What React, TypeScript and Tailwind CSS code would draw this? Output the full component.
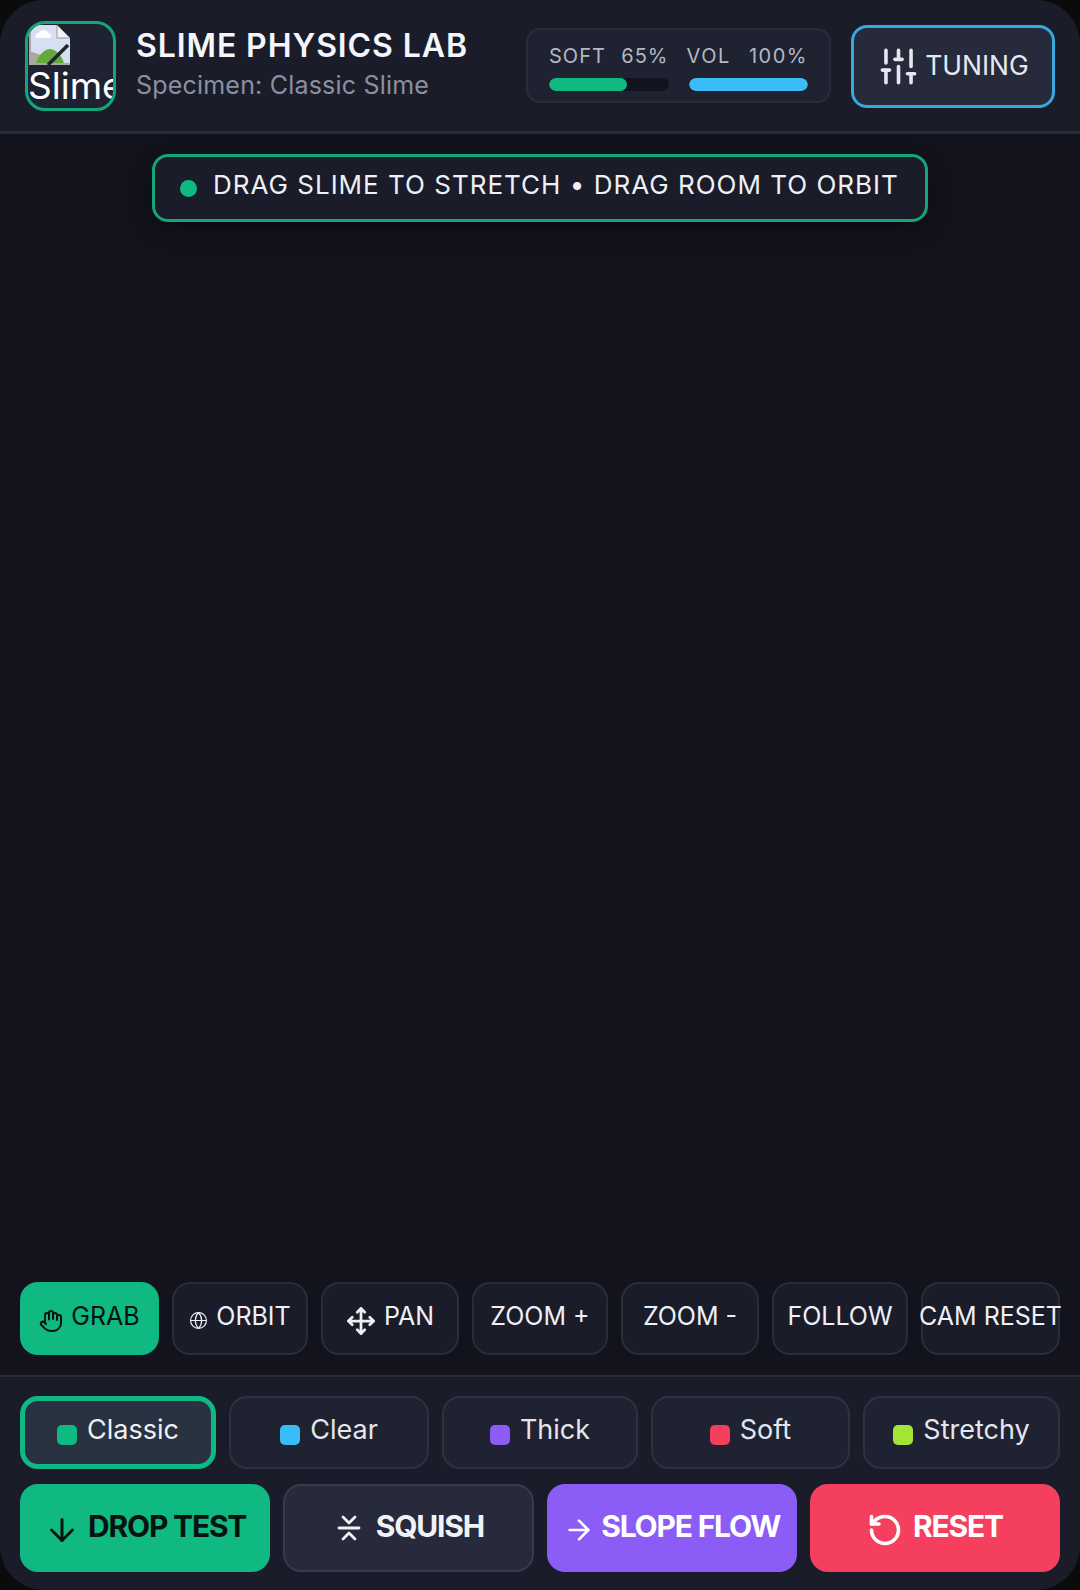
import React from 'react';
import { ArrowDown, ArrowRight, Globe, Hand, Move, RotateCcw, SlidersVertical } from 'lucide-react';

const tools = [
  { label: 'GRAB', icon: <Hand size={24} strokeWidth={2} className="mt-1" />, active: true },
  { label: 'ORBIT', icon: <Globe size={19} strokeWidth={1.5} className="mt-1" /> },
  { label: 'PAN', icon: <Move size={30} strokeWidth={2.2} className="mt-1" /> },
  { label: 'ZOOM +' },
  { label: 'ZOOM -' },
  { label: 'FOLLOW' },
  { label: 'CAM RESET' },
];

const presets = [
  { label: 'Classic', color: 'bg-[#10b981]', active: true },
  { label: 'Clear', color: 'bg-[#38bdf8]' },
  { label: 'Thick', color: 'bg-[#8b5cf6]' },
  { label: 'Soft', color: 'bg-[#f43f5e]' },
  { label: 'Stretchy', color: 'bg-[#a3e635]' },
];

function SquishIcon() {
  return (
    <svg width="24" height="28" viewBox="0 0 24 28" fill="none" stroke="currentColor" strokeWidth="2.8" strokeLinecap="round" strokeLinejoin="round">
      <path d="M2 14h20" />
      <path d="M6 3l6 6 6-6" />
      <path d="M6 25l6-6 6 6" />
    </svg>
  );
}

function BrokenImage() {
  return (
    <svg width="41" height="40" viewBox="0 0 41 40" className="block">
      <path d="M0 0h28l13 13v27H0z" fill="#d5e0f2" />
      <path d="M0 26l12 4-4 10H0z" fill="#a9a9a0" />
      <path d="M0 0h2v40H0zM0 38h41v2H0z" fill="#a8a8a8" />
      <path d="M28 0l13 13H28z" fill="#f2f2f2" stroke="#9a9a9a" strokeWidth="1" />
      <path d="M6 12c0-3 2-4 4-4 1-4 8-4 9 0 3 0 4 3 2 5H7c-1 0-1-1-1-1z" fill="#ffffff" />
      <path d="M7 38c3-9 9-14 14-14s11 5 14 14z" fill="#62ab3a" />
      <path d="M19 40L39 20" stroke="#20242f" strokeWidth="3.5" />
    </svg>
  );
}

export default function App() {
  return (
    <div className="h-[1590px] w-[1080px] overflow-hidden bg-[#0b0b0b] font-['Inter',sans-serif]">
      <div className="flex h-full flex-col overflow-hidden rounded-[44px] bg-[#12131d] text-[#eef0f6]">
        {/* Header */}
        <header className="flex h-[134px] shrink-0 items-center border-b-[3px] border-[#2a2d39] bg-[#1a1d29] px-[25px]">
          <div className="h-[90px] w-[91px] shrink-0 overflow-hidden rounded-[20px] border-[3px] border-[#14a57a] bg-[#1f2331] text-[37px] leading-[42px] text-white">
            <div className="pl-[1px] pt-[1px]">
              <BrokenImage />
            </div>
            <div className="whitespace-nowrap">Slime</div>
          </div>
          <div className="ml-[20px] flex w-[390px] shrink-0 flex-col pb-[5px]">
            <h1 className="text-[32px] font-semibold leading-[40px] tracking-[0.9px] text-[#f4f6fb]">SLIME PHYSICS LAB</h1>
            <p className="mt-[3px] text-[25px] leading-[32px] tracking-[0.2px] text-[#8b90a0]">Specimen: Classic Slime</p>
          </div>
          <div className="flex h-[75px] w-[305px] shrink-0 gap-[20px] rounded-[14px] border-2 border-[#2a2d39] bg-[#1f2230] px-[21px] pt-[13px]">
            <div className="flex-1">
              <div className="flex justify-between text-[20px] leading-[26px] tracking-[1px] text-[#b4b8c4]">
                <span>SOFT</span>
                <span>65%</span>
              </div>
              <div className="mt-[9px] h-[13px] overflow-hidden rounded-full bg-[#12131d]">
                <div className="h-full rounded-full bg-[#10b981]" style={{ width: '65%' }} />
              </div>
            </div>
            <div className="flex-1">
              <div className="-ml-[2px] flex justify-between text-[20px] leading-[26px] tracking-[1.5px] text-[#b4b8c4]">
                <span>VOL</span>
                <span>100%</span>
              </div>
              <div className="mt-[9px] h-[13px] overflow-hidden rounded-full bg-[#12131d]">
                <div className="h-full rounded-full bg-[#38bdf8]" style={{ width: '100%' }} />
              </div>
            </div>
          </div>
          <button className="ml-auto mt-[1px] flex h-[83px] w-[204px] shrink-0 items-center justify-center gap-[5px] rounded-[16px] border-[3px] border-[#38a9de] bg-[#262a3b] text-[26.5px] text-[#e6e8f0]">
            <SlidersVertical size={43} strokeWidth={2} />
            TUNING
          </button>
        </header>

        {/* Stage */}
        <main className="flex flex-1 flex-col items-center pt-[20px]">
          <div className="flex h-[68px] w-[776px] items-center whitespace-nowrap rounded-[16px] border-[3px] border-[#14a57a] bg-[#1a1d29] pl-[25px] text-[26px] tracking-[1px] text-[#eef0f6] shadow-[0_8px_24px_rgba(0,0,0,0.4)]">
            <span className="mr-[16px] h-[17px] w-[17px] rounded-full bg-[#10b981]" />
            <span className="pb-[7px]">DRAG SLIME TO STRETCH • DRAG ROOM TO ORBIT</span>
          </div>
        </main>

        {/* Camera tools */}
        <div className="grid shrink-0 grid-cols-[139px_136px_138px_136px_138px_136px_139px] gap-[13px] px-[20px] pb-[20px]">
          {tools.map((tool) => (
            <button
              key={tool.label}
              className={`flex h-[73px] items-center justify-center gap-[8px] whitespace-nowrap rounded-[18px] text-[25px] ${
                tool.active
                  ? 'bg-[#10b981] text-[#07130f]'
                  : 'border-2 border-[#2a2d39] bg-[#1a1d29] text-[#eef0f6]'
              }`}
            >
              {tool.icon}
              <span className="pb-[4px]">{tool.label}</span>
            </button>
          ))}
        </div>

        {/* Presets and actions */}
        <div className="shrink-0 border-t-2 border-[#2a2d39] bg-[#1a1d29] px-[20px] pb-[18px] pt-[19px]">
          <div className="grid grid-cols-[196px_200px_196px_199px_197px] gap-[13px]">
            {presets.map((preset) => (
              <button
                key={preset.label}
                className={`flex h-[73px] items-center justify-center gap-[10px] rounded-[18px] text-[27px] ${
                  preset.active
                    ? 'border-[5px] border-[#10b981] bg-[#283240] text-[#eef0f6]'
                    : 'border-2 border-[#2e3140] bg-[#1f2230] text-[#e4e6ee]'
                }`}
              >
                <span className={`mt-[4px] h-[20px] w-[20px] rounded-[5px] ${preset.color}`} />
                <span className="pb-[5px]">{preset.label}</span>
              </button>
            ))}
          </div>
          <div className="mt-[15px] grid grid-cols-4 gap-[13px] text-[30px] font-bold tracking-[-1.2px]">
            <button className="flex h-[88px] items-center justify-center gap-[8px] rounded-[18px] bg-[#10b981] text-[#07130f]">
              <ArrowDown size={36} strokeWidth={2} className="mt-1" />
              <span className="pb-[3px]">DROP TEST</span>
            </button>
            <button className="flex h-[88px] items-center justify-center gap-[15px] rounded-[18px] border-2 border-[#363a4c] bg-[#262a3b] pl-[4px] text-[#f0f2f8]">
              <SquishIcon />
              <span className="pb-[3px]">SQUISH</span>
            </button>
            <button className="flex h-[88px] items-center justify-center gap-[6px] rounded-[18px] bg-[#8b5cf6] text-white">
              <ArrowRight size={32} strokeWidth={2} className="mt-1" />
              <span className="pb-[3px]">SLOPE FLOW</span>
            </button>
            <button className="flex h-[88px] items-center justify-center gap-[10px] rounded-[18px] bg-[#f43f5e] text-white">
              <RotateCcw size={36} strokeWidth={2.4} className="mt-1" />
              <span className="pb-[3px]">RESET</span>
            </button>
          </div>
        </div>
      </div>
    </div>
  );
}
